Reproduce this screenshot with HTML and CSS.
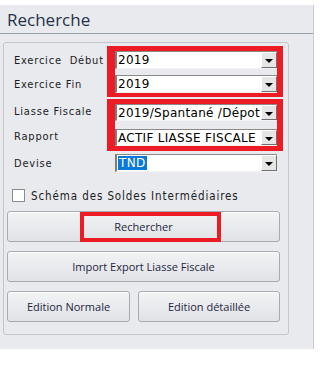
FILE: index.html
```html
<!DOCTYPE html>
<html lang="fr">
<head>
    <meta charset="UTF-8">
    <title>Recherche</title>
    <link rel="stylesheet" href="styles.css">
</head>
<body>
    <div class="panel">
        <div class="panel-title">Recherche</div>

        <div class="group">
            <!-- Exercices -->
            <div class="pair pair-a">
                <div class="labels">
                    <span class="label">Exercice&nbsp; Début</span>
                    <span class="label">Exercice Fin</span>
                </div>
                <div class="frame">
                    <div class="combo"><span class="combo-text">2019</span><span class="combo-btn"></span></div>
                    <div class="combo"><span class="combo-text">2019</span><span class="combo-btn"></span></div>
                </div>
            </div>

            <!-- Liasse / Rapport -->
            <div class="pair pair-b">
                <div class="labels">
                    <span class="label">Liasse Fiscale</span>
                    <span class="label">Rapport</span>
                </div>
                <div class="frame">
                    <div class="combo"><span class="combo-text">2019/Spantané /Dépot p</span><span class="combo-btn"></span></div>
                    <div class="combo"><span class="combo-text">ACTIF LIASSE FISCALE</span><span class="combo-btn"></span></div>
                </div>
            </div>

            <!-- Devise -->
            <div class="pair pair-c">
                <div class="labels">
                    <span class="label">Devise</span>
                </div>
                <div class="frame frame-plain">
                    <div class="combo"><span class="combo-text"><span class="selected">TND</span></span><span class="combo-btn"></span></div>
                </div>
            </div>

            <label class="check-row">
                <span class="checkbox"></span>
                <span class="check-label">Schéma des Soldes Intermédiaires</span>
            </label>

            <button class="btn btn-search">Rechercher<span class="mark"></span></button>
            <button class="btn">Import Export Liasse Fiscale</button>
            <div class="btn-row">
                <button class="btn btn-normal">Edition Normale</button>
                <button class="btn btn-detail">Edition détaillée</button>
            </div>
        </div>
    </div>
</body>
</html>
```

FILE: styles.css
```css
/* General styles */
body {
    margin: 0;
    padding: 0;
    background: #ffffff;
    font-family: "Open Sans", Arial, sans-serif;
}

.panel {
    margin-top: 5px;
    width: 313px;
    height: 344px;
    background: #e9eaee;
    border-right: 1px solid #c9ccd2;
}

.panel-title {
    height: 29px;
    box-sizing: border-box;
    padding: 4px 0 0 7px;
    font-size: 17px;
    line-height: 22px;
    color: #263249;
    border-bottom: 1px solid #98a0ac;
}

/* Group box */
.group {
    margin: 8px 0 0 3px;
    width: 286px;
    height: 293px;
    box-sizing: border-box;
    border: 1px solid #c3c6cb;
    border-radius: 3px;
    padding-top: 3px;
}

.pair {
    display: flex;
}

.labels {
    width: 103px;
    box-sizing: border-box;
    padding-left: 10px;
    display: flex;
    flex-direction: column;
}

.label {
    font-family: "DejaVu Sans Condensed", "DejaVu Sans", sans-serif;
    font-size: 11px;
    letter-spacing: 0.8px;
    color: #1c1c24;
    white-space: nowrap;
    display: flex;
    align-items: center;
}

.frame {
    position: relative;
    width: 176px;
    box-sizing: border-box;
    border: solid #ed1c24;
    border-width: 5px 6px 4px 8px;
    display: flex;
    flex-direction: column;
}

.frame-plain {
    border-color: transparent;
}

/* Exercice rows */
.pair-a .labels {
    padding-top: 5px;
    gap: 6px;
}

.pair-a .label,
.pair-a .combo {
    height: 18px;
}

.pair-a .frame {
    gap: 6px;
}

/* Liasse / Rapport rows */
.pair-b {
    margin-top: 2px;
}

.pair-b .labels {
    padding-top: 4px;
    gap: 8px;
}

.pair-b .label,
.pair-b .combo {
    height: 17px;
}

.pair-b .frame {
    gap: 8px;
    border-bottom-width: 5px;
}

/* Devise */
.pair-c {
    margin-top: 3px;
}

.pair-c .frame {
    border-width: 0 6px 0 8px;
}

.pair-c .label,
.pair-c .combo {
    height: 18px;
}

/* Combo box */
.combo {
    display: flex;
    background: #ffffff;
    box-sizing: border-box;
    border-top: 1px solid #8a8a8a;
    border-left: 2px solid #7c7c7c;
    border-bottom: 1px solid #f2f2f2;
    overflow: hidden;
}

.combo-text {
    flex: 1;
    overflow: hidden;
    white-space: nowrap;
    padding-left: 1px;
    font-family: "DejaVu Sans", sans-serif;
    font-size: 12px;
    letter-spacing: 0.3px;
    line-height: 16px;
    color: #000000;
}

.selected {
    background: #0a78d7;
    color: #ffffff;
    padding: 0 2px 0 1px;
}

.combo-btn {
    width: 16px;
    box-sizing: border-box;
    background: #e6e6e6;
    border-top: 1px solid #ffffff;
    border-left: 1px solid #ffffff;
    border-right: 1px solid #6f6f6f;
    border-bottom: 1px solid #6f6f6f;
    display: flex;
    align-items: center;
    justify-content: center;
}

.combo-btn::after {
    content: "";
    border-left: 4px solid transparent;
    border-right: 4px solid transparent;
    border-top: 4px solid #000000;
    margin-top: 2px;
}

/* Checkbox */
.check-row {
    display: flex;
    align-items: center;
    gap: 6px;
    margin: 17px 0 0 8px;
    height: 13px;
}

.checkbox {
    width: 13px;
    height: 13px;
    box-sizing: border-box;
    background: #ffffff;
    border: 1px solid #8b8b8b;
}

.check-label {
    font-family: "DejaVu Sans Condensed", "DejaVu Sans", sans-serif;
    font-size: 11.5px;
    letter-spacing: 0.9px;
    color: #1c1c24;
}

/* Buttons */
.btn {
    display: block;
    margin: 9px 0 0 3px;
    width: 273px;
    height: 31px;
    box-sizing: border-box;
    border: 1px solid #a6aab1;
    border-radius: 3px;
    background: linear-gradient(#f2f3f5, #e1e2e6);
    box-shadow: inset 0 1px 0 #ffffff;
    font-family: "Open Sans", Arial, sans-serif;
    font-size: 11px;
    color: #1c2640;
    padding: 0;
    cursor: pointer;
}

.btn-search {
    position: relative;
}

.mark {
    position: absolute;
    left: 72px;
    top: 0;
    width: 141px;
    height: 30px;
    box-sizing: border-box;
    border: 4px solid #ed1c24;
}

.btn-row {
    display: flex;
    gap: 8px;
    margin: 9px 0 0 3px;
}

.btn-row .btn {
    margin: 0;
}

.btn-normal {
    width: 123px;
}

.btn-detail {
    width: 142px;
}
```
